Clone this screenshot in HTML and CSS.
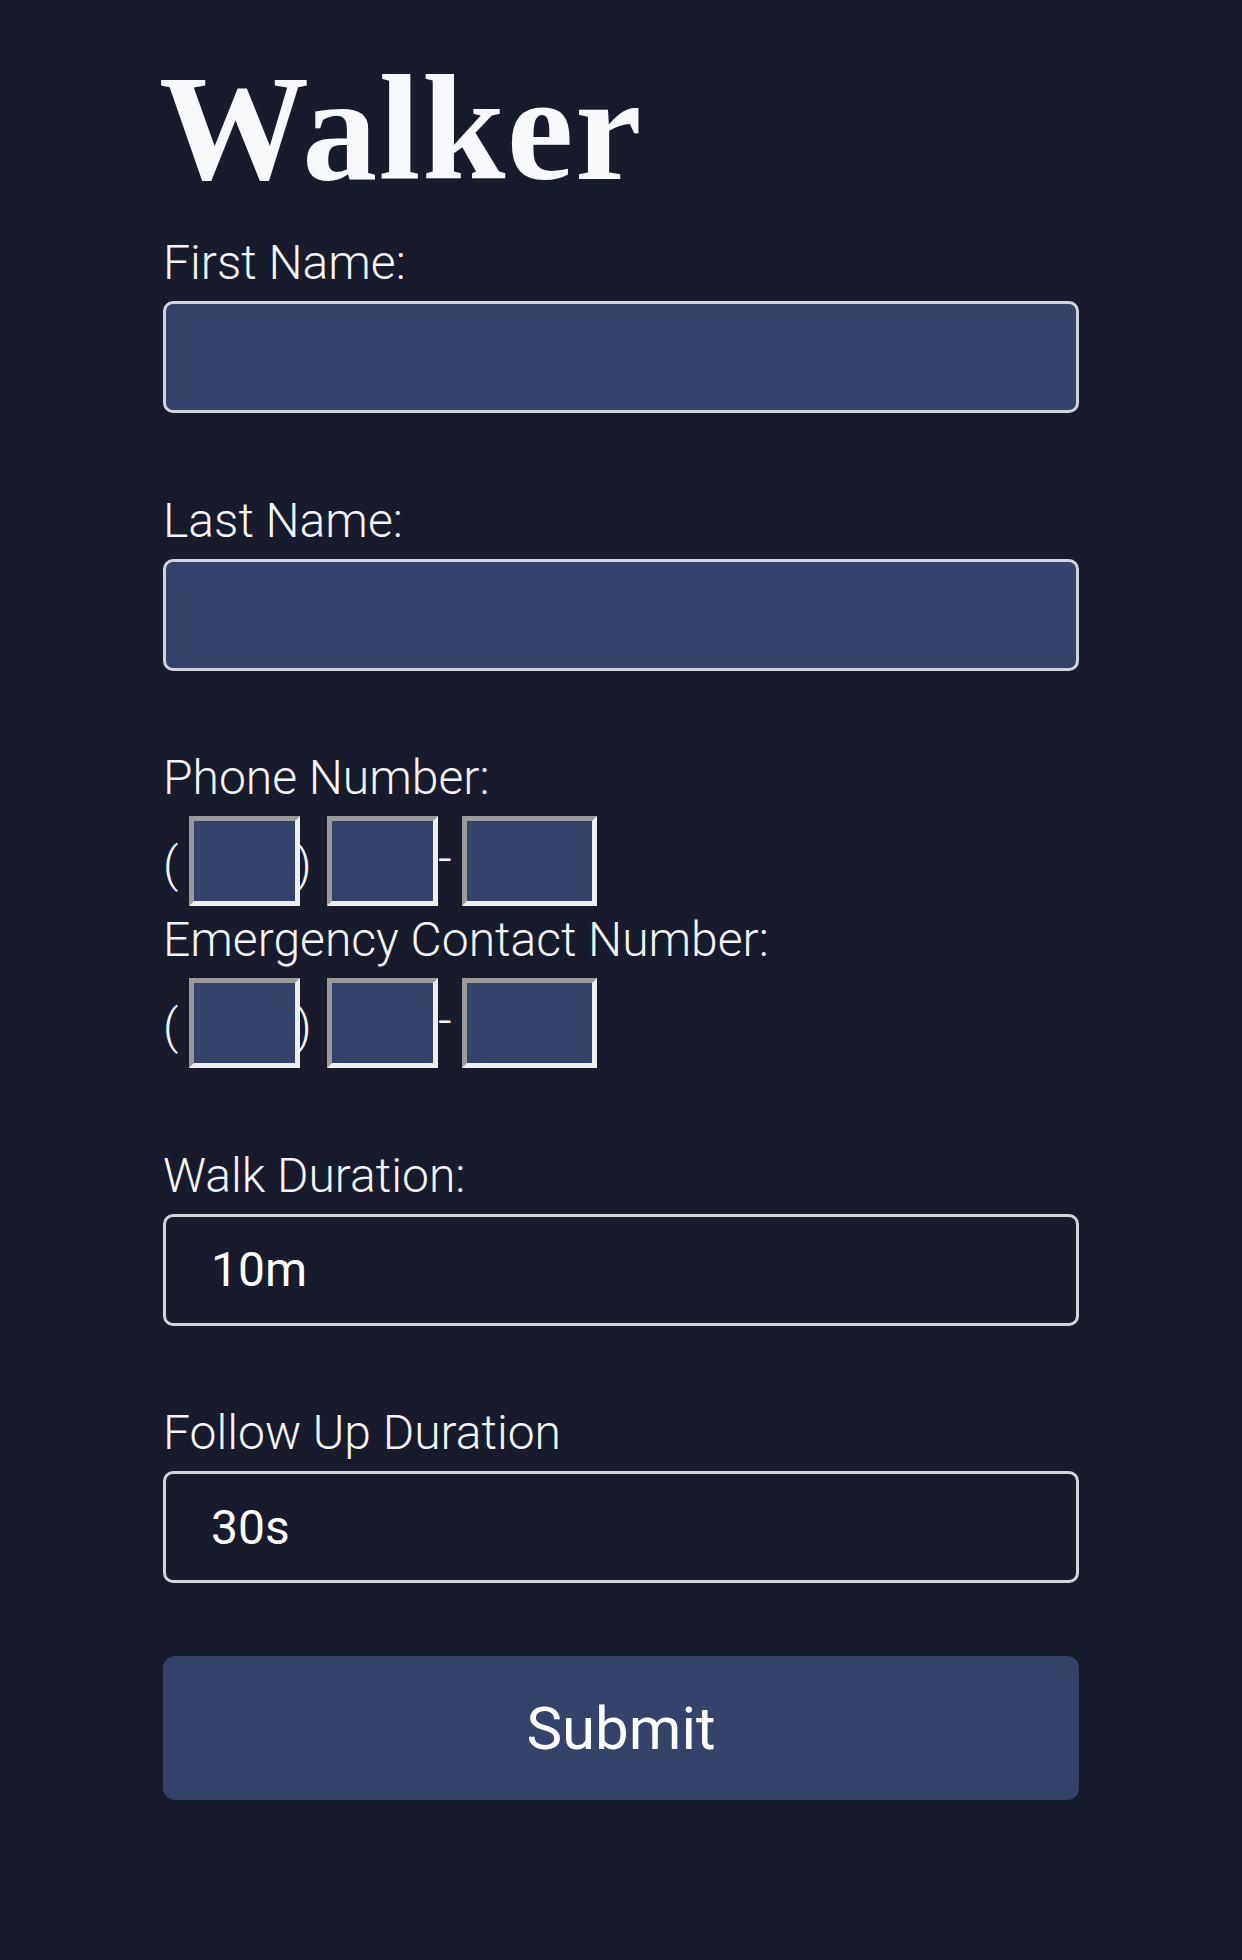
FILE: index.html
```html
<!DOCTYPE html>
<html lang="en">
<head>
<meta charset="utf-8">
<title>Walker</title>
<link rel="stylesheet" href="styles.css">
</head>
<body>
<main class="page">
  <h1 class="title">Walker</h1>
  <form class="form">
    <div class="field">
      <label class="label" for="first-name">First Name:</label>
      <input class="text-input filled" id="first-name" type="text">
    </div>
    <div class="field">
      <label class="label" for="last-name">Last Name:</label>
      <input class="text-input filled" id="last-name" type="text">
    </div>
    <div class="field">
      <label class="label">Phone Number:</label>
      <div class="phone-row">
        <span class="sep paren-open">(</span><input class="ph ph-short" type="text"><span class="sep paren-close">)</span><input class="ph ph-short" type="text"><span class="sep dash">-</span><input class="ph ph-long" type="text">
      </div>
      <label class="label">Emergency Contact Number:</label>
      <div class="phone-row phone-row-last">
        <span class="sep paren-open">(</span><input class="ph ph-short" type="text"><span class="sep paren-close">)</span><input class="ph ph-short" type="text"><span class="sep dash">-</span><input class="ph ph-long" type="text">
      </div>
    </div>
    <div class="field">
      <label class="label" for="walk">Walk Duration:</label>
      <input class="text-input plain" id="walk" type="text" value="10m">
    </div>
    <div class="field field-last">
      <label class="label" for="follow">Follow Up Duration</label>
      <input class="text-input plain" id="follow" type="text" value="30s">
    </div>
    <button class="submit" type="button">Submit</button>
  </form>
</main>
</body>
</html>
```

FILE: styles.css
```css
html, body {
  margin: 0;
  padding: 0;
  background: #181b2c;
}

body {
  min-height: 1960px;
  font-family: Roboto, "Liberation Sans", sans-serif;
  color: #f4f5f8;
}

.page {
  width: 916px;
  margin: 0 auto;
  padding-top: 53px;
}

.title {
  margin: 0 0 32px -4px;
  font-family: "Liberation Serif", serif;
  font-weight: 700;
  font-size: 150px;
  line-height: 150px;
  letter-spacing: 1.5px;
  color: #f8f9fb;
}

.form {
  display: flex;
  flex-direction: column;
}

.field {
  display: flex;
  flex-direction: column;
  margin-bottom: 79.5px;
}

.field-last {
  margin-bottom: 73px;
}

.label {
  display: block;
  font-family: Roboto, sans-serif;
  font-weight: 300;
  font-size: 48px;
  line-height: 56px;
  color: #f4f5f8;
  margin-bottom: 10px;
}

.text-input {
  box-sizing: border-box;
  width: 916px;
  height: 112px;
  margin: 0;
  border: 3px solid #d1d5db;
  border-radius: 10px;
  padding: 0 0 0 45px;
  font-family: Roboto, sans-serif;
  font-size: 48px;
  font-weight: 400;
  color: #ffffff;
  outline: none;
}

.filled {
  background: #35426a;
}

.plain {
  background: #181b2c;
}

.phone-row {
  display: flex;
  align-items: flex-start;
  height: 90px;
  margin-bottom: 6px;
}

.phone-row-last {
  margin-bottom: 0;
}

.sep {
  display: block;
  font-family: Roboto, sans-serif;
  font-weight: 300;
  font-size: 48px;
  line-height: 48px;
  color: #f4f5f8;
  flex: none;
}

.paren-open {
  width: 26px;
  margin-top: 25px;
}

.paren-close {
  width: 31px;
  margin-left: -4px;
  margin-top: 25px;
}

.dash {
  width: 24px;
  margin-top: 19px;
}

.ph {
  box-sizing: border-box;
  flex: none;
  height: 90px;
  margin: 0;
  padding: 0;
  background: #35426a;
  border: 5px solid;
  border-color: #9a9a9a #eeeeee #eeeeee #9a9a9a;
  border-radius: 0;
  outline: none;
}

.ph-short {
  width: 111px;
}

.ph-long {
  width: 135px;
}

.submit {
  box-sizing: border-box;
  width: 916px;
  height: 144px;
  margin: 0;
  border: none;
  border-radius: 12px;
  background: #35426a;
  color: #ffffff;
  font-family: Roboto, sans-serif;
  font-weight: 400;
  font-size: 60px;
  cursor: pointer;
}
```
